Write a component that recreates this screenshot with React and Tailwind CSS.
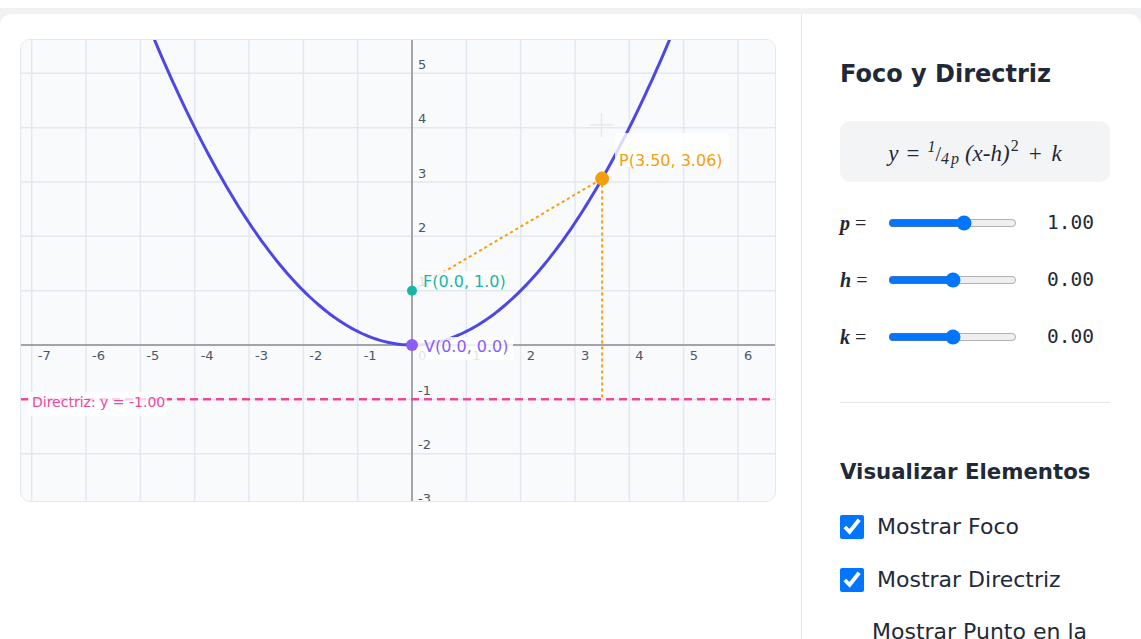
import React from "react";

const U = 54.33;
const OX = 391;
const OY = 305;
const X = (x) => OX + x * U;
const Y = (y) => OY - y * U;
const DV = '"DejaVu Sans", sans-serif';
const SERIF = '"Liberation Serif", serif';

function Graph() {
  const pts = [];
  for (let x = -7.6; x <= 7.0001; x += 0.05) {
    pts.push(`${X(x).toFixed(2)},${Y((x * x) / 4).toFixed(2)}`);
  }
  const curve = "M" + pts.join(" L");
  const vx = [];
  for (let i = -8; i <= 7; i++) vx.push(i);
  const hy = [];
  for (let j = -3; j <= 6; j++) hy.push(j);
  const px = 3.5;
  const py = (px * px) / 4;
  return (
    <svg width="754" height="461" viewBox="0 0 754 461" className="block">
      <rect x="0" y="0" width="754" height="461" fill="#f8fafc" />
      {vx.map((i) => (
        <line key={"v" + i} x1={X(i)} y1="0" x2={X(i)} y2="461" stroke="#e3e8f0" strokeWidth="1.5" />
      ))}
      {hy.map((j) => (
        <line key={"h" + j} x1="0" y1={Y(j)} x2="754" y2={Y(j)} stroke="#e3e8f0" strokeWidth="1.5" />
      ))}
      <line x1="0" y1={OY} x2="754" y2={OY} stroke="#a3a3a8" strokeWidth="2" />
      <line x1={OX} y1="0" x2={OX} y2="461" stroke="#a3a3a8" strokeWidth="2" />
      <g fill="#4b5563" fontSize="13" fontFamily={DV}>
        {[-7, -6, -5, -4, -3, -2, -1, 0, 1, 2, 3, 4, 5, 6].map((i) => (
          <text key={"xl" + i} x={X(i) + 6} y={OY + 15}>
            {i}
          </text>
        ))}
        {[-3, -2, -1, 1, 2, 3, 4, 5].map((j) => (
          <text key={"yl" + j} x={OX + 6} y={Y(j) - 4.5}>
            {j}
          </text>
        ))}
      </g>
      <line x1="569" y1="85" x2="592" y2="85" stroke="#e6e8ee" strokeWidth="1.5" />
      <line x1="580.5" y1="73" x2="580.5" y2="97" stroke="#e6e8ee" strokeWidth="1.5" />
      <line x1="0" y1={Y(-1)} x2="754" y2={Y(-1)} stroke="#ec4899" strokeWidth="2.5" strokeDasharray="8 5" />
      <path d={curve} fill="none" stroke="#4f46e5" strokeWidth="3" />
      <line x1={X(0)} y1={Y(1)} x2={X(px)} y2={Y(py)} stroke="#f59e0b" strokeWidth="2" strokeDasharray="3 3" />
      <line x1={X(px)} y1={Y(py)} x2={X(px)} y2={Y(-1)} stroke="#f59e0b" strokeWidth="2" strokeDasharray="3 3" />
      <g fontFamily={DV} fontSize="16">
        <rect x="7" y="352" width="139" height="24" fill="#ffffff" fillOpacity="0.75" />
        <text x="11" y="367" fill="#ec4899" fontSize="14">Directriz: y = -1.00</text>
        <rect x="395" y="231" width="90" height="18" fill="#ffffff" fillOpacity="0.8" />
        <text x="402" y="247" fill="#14b8a6">F(0.0, 1.0)</text>
        <rect x="396" y="297" width="96" height="23" fill="#ffffff" fillOpacity="0.85" />
        <text x="403" y="311.5" fill="#8b5cf6">V(0.0, 0.0)</text>
        <rect x="594" y="93" width="114" height="34" fill="#ffffff" fillOpacity="0.8" />
        <text x="598" y="126" fill="#f59e0b">P(3.50, 3.06)</text>
      </g>
      <circle cx={X(0)} cy={Y(1)} r="5" fill="#14b8a6" />
      <circle cx={X(0)} cy={Y(0)} r="6" fill="#8b5cf6" />
      <circle cx={X(px)} cy={Y(py)} r="7" fill="#f59e0b" />
    </svg>
  );
}

function SliderRow({ label, value, min, max, step, display }) {
  return (
    <div className="flex items-center h-[24px]">
      <div className="w-[48px] shrink-0 text-[20px] leading-6 text-[#1f2937]" style={{ fontFamily: SERIF }}>
        <span className="italic font-bold">{label}</span> =
      </div>
      <input type="range" min={min} max={max} step={step} defaultValue={value} className="w-[129px] shrink-0" />
      <div className="ml-[30px] text-[19.5px] leading-6 text-[#1f2937]" style={{ fontFamily: '"DejaVu Sans Mono", monospace' }}>
        {display}
      </div>
    </div>
  );
}

function Check({ label }) {
  return (
    <label className="flex items-center gap-[13px] h-[28px]">
      <input type="checkbox" defaultChecked className="w-[24px] h-[24px] shrink-0" />
      <span className="text-[22px] leading-[28px] text-[#1f2937]">{label}</span>
    </label>
  );
}

export default function App() {
  return (
    <div className="w-[1141px] h-[639px] overflow-hidden bg-white" style={{ fontFamily: DV }}>
      <div className="h-[8px] bg-white" />
      <div className="bg-[#f1f2f4] pt-[6px] h-[631px]">
        <div className="bg-white rounded-t-[12px] h-[625px] flex">
          <div className="w-[801px] shrink-0 pl-[20px] pt-[25px]">
            <div className="w-[756px] h-[463px] border border-[#e2e8f0] rounded-[10px] overflow-hidden bg-[#f8fafc]">
              <Graph />
            </div>
          </div>
          <div className="flex-1 border-l border-[#e5e7eb] pl-[38px] pr-[31px] pt-[44px]">
            <h2 className="text-[24px] leading-8 font-bold text-[#1f2937]">Foco y Directriz</h2>
            <div
              className="mt-[31px] h-[61px] rounded-[10px] bg-[#f3f4f6] flex items-center justify-center pt-[4px] text-[23px] leading-none italic text-[#1f2937]"
              style={{ fontFamily: SERIF }}
            >
              <span>y</span>
              <span className="mx-[8px] not-italic">=</span>
              <span className="text-[16px] relative -top-[7px]">1</span>
              <span className="text-[20px] not-italic">/</span>
              <span className="text-[16px] tracking-[2px] relative top-[5px]">4p</span>
              <span className="ml-[4px]">(x-h)</span>
              <span className="text-[16px] not-italic relative -top-[8px] ml-[1px]">2</span>
              <span className="mx-[10px] not-italic">+</span>
              <span>k</span>
            </div>
            <div className="mt-[29px] flex flex-col gap-[33px]">
              <SliderRow label="p" value={1} min={0.25} max={1.5} step={0.05} display="1.00" />
              <SliderRow label="h" value={0} min={-5} max={5} step={0.1} display="0.00" />
              <SliderRow label="k" value={0} min={-5} max={5} step={0.1} display="0.00" />
            </div>
            <div className="mt-[53px] h-px bg-[#e5e7eb]" />
            <h3 className="mt-[55px] text-[21.3px] leading-[28px] font-bold text-[#1f2937]">Visualizar Elementos</h3>
            <div className="mt-[27px] flex flex-col gap-[25px]">
              <Check label="Mostrar Foco" />
              <Check label="Mostrar Directriz" />
              <label className="flex items-start gap-[13px] -mt-px">
                <input type="checkbox" className="w-[19px] h-[19px] shrink-0 mt-[40px]" />
                <span className="text-[22px] leading-[28px] text-[#1f2937]">Mostrar Punto en la Parábola</span>
              </label>
            </div>
          </div>
        </div>
      </div>
    </div>
  );
}
